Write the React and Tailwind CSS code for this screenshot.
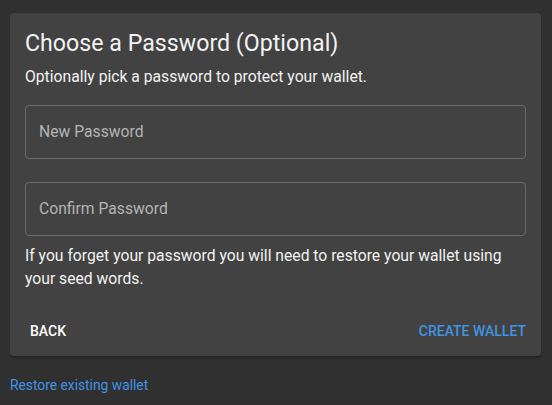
function OutlinedField({ label }) {
  return (
    <div className="flex h-[54px] items-center rounded-[4px] border border-[#6a6a6a] px-[13px]">
      <span className="text-[15.7px] text-[#b4b4b4]">{label}</span>
    </div>
  );
}

export default function App() {
  return (
    <div className="min-h-[405px] bg-[#303030] pl-[10px] pr-[11px] pt-[13px] font-['Roboto',sans-serif]">
      <section className="rounded-[4px] bg-[#424242] px-[15px] pb-[13px] pt-[14px] shadow-[0_2px_2px_rgba(0,0,0,0.25)]">
        <h2 className="text-[23.2px] leading-[32px] text-[#f2f2f2]">Choose a Password (Optional)</h2>
        <p className="mt-[6px] text-[15.7px] leading-[24px] text-[#f2f2f2]">
          Optionally pick a password to protect your wallet.
        </p>

        <div className="mt-[16px]">
          <OutlinedField label="New Password" />
        </div>
        <div className="mt-[23px]">
          <OutlinedField label="Confirm Password" />
        </div>

        <p className="mt-[8px] text-[15.7px] leading-[23px] text-[#f2f2f2]">
          If you forget your password you will need to restore your wallet using your seed words.
        </p>

        <div className="mt-[29px] flex items-center justify-between pl-[5px] text-[14px] font-medium leading-[24px]">
          <button className="uppercase text-white">Back</button>
          <button className="uppercase text-[#3f95e4]">Create Wallet</button>
        </div>
      </section>

      <div className="mt-[19px] text-[13.8px] leading-[20px] text-[#3f95e4]">Restore existing wallet</div>
    </div>
  );
}
